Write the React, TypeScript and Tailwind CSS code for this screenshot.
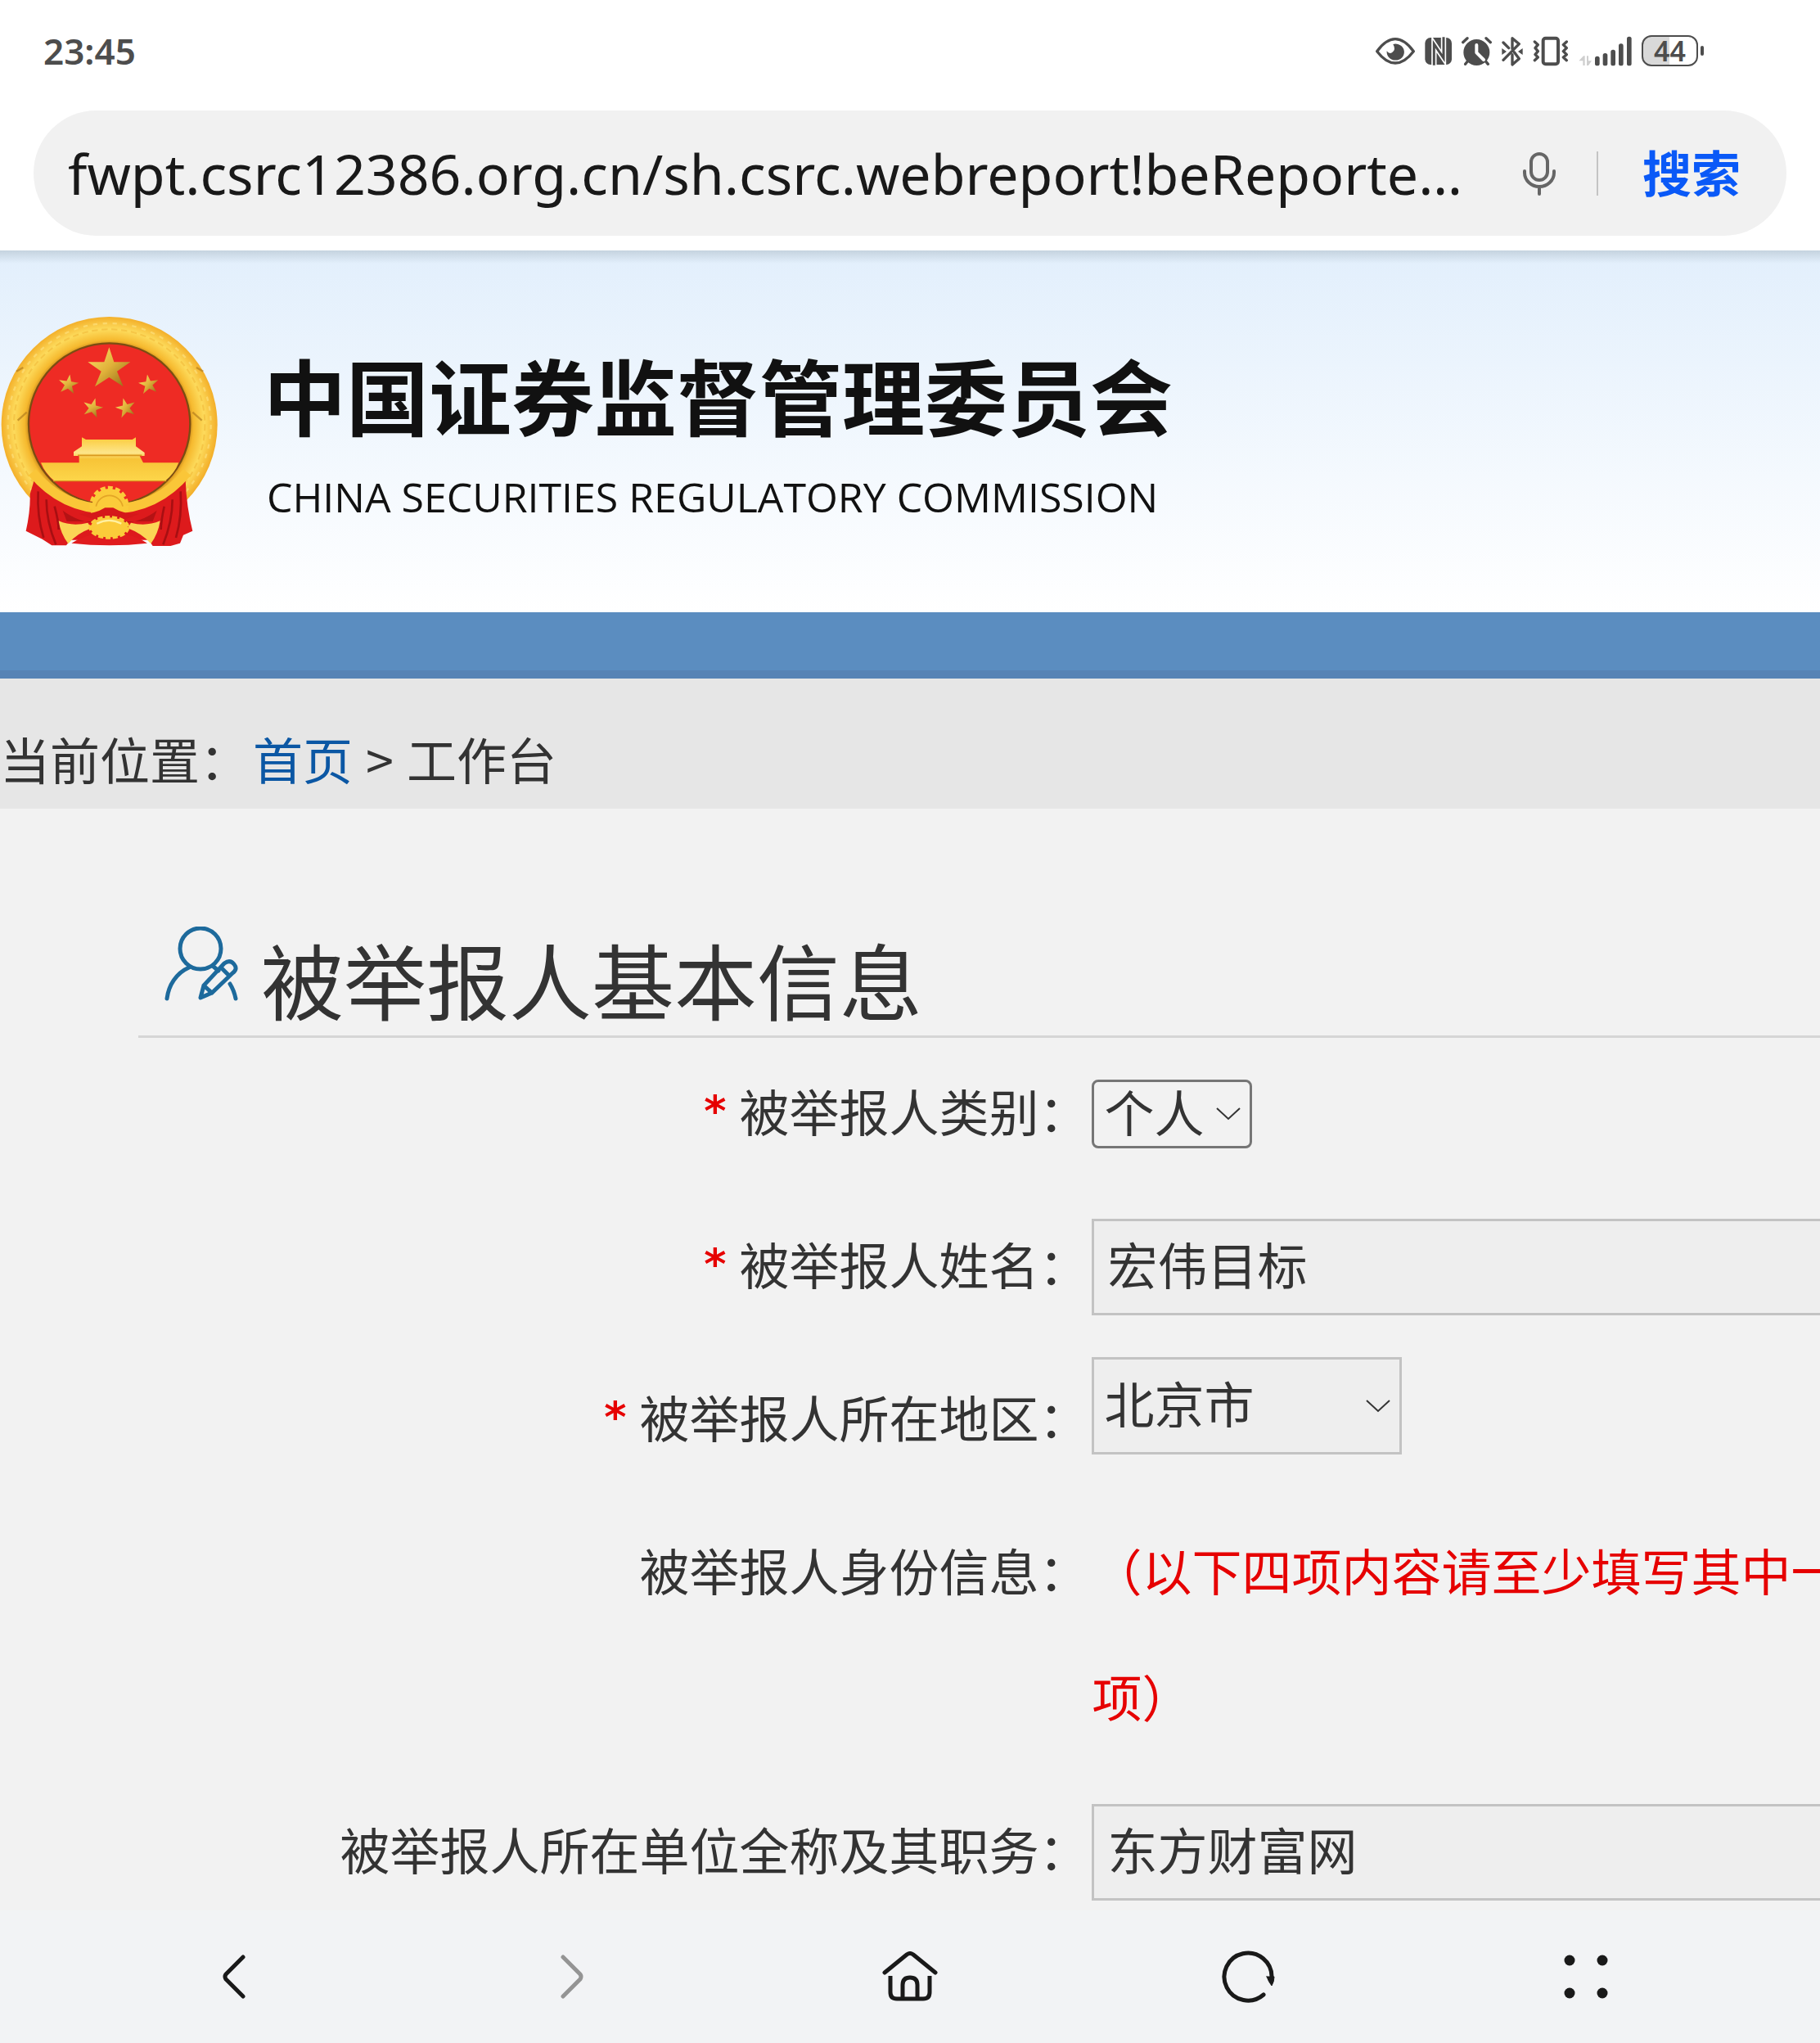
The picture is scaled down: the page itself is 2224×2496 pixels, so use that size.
import type { ReactNode } from 'react';

// phone status icons, all share the same height so they line up in one row
function StatusIcons() {
  return (
    <div className="flex items-center gap-3 text-[#4d4d4d]">
      {/* eye comfort */}
      <svg width="48" height="40" viewBox="66 63 144 120" fill="none" aria-hidden="true">
        <path d="M71 125Q104 80 138 80T205 125Q172 168 138 168T71 125Z" stroke="currentColor" strokeWidth="10" strokeLinejoin="round" />
        <path d="M130 99A32 30 0 1 1 107 124Q114 136 126 130Q142 120 130 99Z" fill="currentColor" />
      </svg>
      {/* nfc */}
      <svg width="33" height="40" viewBox="246 63 99 120" fill="none" aria-hidden="true">
        <rect x="247" y="75" width="98" height="99" rx="20" fill="currentColor" />
        <path d="M280 176V98L315 150V73" stroke="#fff" strokeWidth="19" />
        <path d="M280 176V98L315 150V73" stroke="currentColor" strokeWidth="9" />
      </svg>
      {/* alarm */}
      <svg width="37" height="40" viewBox="383 63 111 120" fill="none" aria-hidden="true">
        <circle cx="438" cy="129" r="48" fill="currentColor" />
        <path d="M388 92L404 77M473 77L489 92M410 155L397 172M466 155L480 172" stroke="currentColor" strokeWidth="10" strokeLinecap="round" />
        <path d="M438 102V130L464 156" stroke="#fff" strokeWidth="12" strokeLinecap="round" strokeLinejoin="round" />
      </svg>
      {/* bluetooth */}
      <svg width="26" height="40" viewBox="530 63 78 120" fill="none" aria-hidden="true">
        <path d="M569 116V77L594 98L536 157M536 93L556 113M576 128L594 152L569 174V137" stroke="currentColor" strokeWidth="10" strokeLinecap="round" strokeLinejoin="round" />
        <path d="M531 114L548 126L531 138ZM607 114L590 126L607 138Z" fill="currentColor" />
      </svg>
      {/* vibrate */}
      <svg width="44" height="40" viewBox="636 63 132 120" fill="none" stroke="currentColor" aria-hidden="true">
        <rect x="674" y="77" width="55" height="95" rx="9" strokeWidth="12" />
        <path d="M643 90L655 101L645 113L655 125L645 137L655 147L643 158M760 90L748 101L760 113L748 125L760 137L748 147L760 158" strokeWidth="10" strokeLinecap="round" strokeLinejoin="round" />
      </svg>
      {/* data + signal */}
      <svg width="65" height="40" viewBox="804 63 195 120" fill="currentColor" aria-hidden="true">
        <path d="M805 160L822 142H827V177H820V160ZM834 142H840V160H852L840 177H834Z" fill="#cfcfcf" />
        <rect x="864" y="143" width="17" height="35" rx="8" />
        <rect x="893" y="132" width="17" height="46" rx="8" />
        <rect x="922" y="119" width="17" height="59" rx="8" />
        <rect x="951" y="97" width="17" height="81" rx="8" />
        <rect x="981" y="71" width="17" height="107" rx="8" />
      </svg>
      <div className="flex items-center gap-[3px]">
        <div className="flex h-[38px] w-[69px] items-center justify-center rounded-xl border-2 border-[#4d4d4d] bg-linear-to-r from-[#d9d9d9] from-50% to-white to-50% text-[34px] leading-none font-semibold">
          44
        </div>
        <div className="h-3 w-1 rounded-sm bg-[#4d4d4d]" />
      </div>
    </div>
  );
}

const STAR = 'M0 -78L18 -24L78 -24L29 10L52 66L0 32L-52 66L-29 10L-78 -24L-18 -24Z';

function Emblem() {
  return (
    <svg width="267" height="280" viewBox="0 50 801 840" role="img" aria-label="国徽" className="shrink-0">
      <defs>
        <radialGradient id="gold" cx="400" cy="445" r="397" gradientUnits="userSpaceOnUse">
          <stop offset="0.74" stopColor="#c98a1c" />
          <stop offset="0.78" stopColor="#f6b92e" />
          <stop offset="0.88" stopColor="#fddb5c" />
          <stop offset="1" stopColor="#f3ae28" />
        </radialGradient>
        <linearGradient id="gate" x1="0" y1="0" x2="0" y2="1">
          <stop offset="0" stopColor="#fbcb3a" />
          <stop offset="0.35" stopColor="#fde58a" />
          <stop offset="0.5" stopColor="#f7c437" />
          <stop offset="1" stopColor="#fdd64a" />
        </linearGradient>
        <linearGradient id="star" x1="0" y1="0" x2="1" y2="1">
          <stop offset="0" stopColor="#ffe36b" />
          <stop offset="0.5" stopColor="#e0b23a" />
          <stop offset="1" stopColor="#8c6414" />
        </linearGradient>
      </defs>
      <circle cx="401" cy="446" r="396" fill="url(#gold)" />
      <circle cx="401" cy="446" r="350" fill="none" stroke="#e9a01f" strokeWidth="6" strokeDasharray="22 14" opacity="0.35" />
      <circle cx="401" cy="446" r="372" fill="none" stroke="#ffe98f" strokeWidth="7" strokeDasharray="16 20" opacity="0.5" />
      <path d="M60 250L85 236M745 250L720 236M65 430L98 400M740 430L706 400" stroke="#a9741b" strokeWidth="7" opacity="0.6" />
      {/* drapes */}
      <path d="M125 650L402 800L680 650Q684 750 706 835L672 850L660 880L625 890H560L545 868H258L243 888H190L155 865L95 835Q112 760 110 700Z" fill="#dd1a1c" />
      <path d="M140 690Q135 780 160 860M170 720Q170 800 205 885M200 745Q215 800 215 830M662 690Q668 780 645 860M632 720Q632 800 598 885M602 745Q590 800 590 830" stroke="#a80f12" strokeWidth="8" fill="none" />
      <path d="M230 760Q310 820 402 800Q495 820 575 760L560 800H245Z" fill="#b51214" />
      <path d="M262 880Q330 835 402 850Q475 835 540 880Q402 895 262 880Z" fill="#e01c1e" />
      <circle cx="401" cy="443" r="296" fill="#ee2b24" stroke="#7b4d12" strokeWidth="7" />
      <path d="M118 620Q230 755 402 755T686 620" stroke="#fac638" strokeWidth="36" fill="none" />
      <path d="M150 585H290V560H270V545L300 525V492L315 500H485L498 492V525L530 548V560H512L525 585H655Q640 625 605 652H200Q165 625 150 585Z" fill="url(#gate)" />
      <path d="M285 558H520" stroke="#d9991f" strokeWidth="5" />
      <path d="M195 652H610" stroke="#d9991f" strokeWidth="4" />
      {/* stars */}
      <path d={STAR} transform="translate(400 240)" fill="url(#star)" />
      <path d={STAR} transform="translate(251 298) rotate(8) scale(.47)" fill="url(#star)" />
      <path d={STAR} transform="translate(545 298) rotate(-8) scale(.47)" fill="url(#star)" />
      <path d={STAR} transform="translate(340 384) rotate(15) scale(.47)" fill="url(#star)" />
      <path d={STAR} transform="translate(461 384) rotate(-15) scale(.47)" fill="url(#star)" />
      {/* gear and knot */}
      <circle cx="400" cy="742" r="62" fill="#fbcb3a" stroke="#fbcb3a" strokeWidth="20" strokeDasharray="17 9" />
      <path d="M352 745A50 50 0 0 1 450 745" stroke="#e3a526" strokeWidth="5" fill="none" />
      <path d="M290 772Q345 775 385 750H415Q455 775 510 772Q450 800 402 800T290 772Z" fill="#d5181a" />
      <path d="M215 798Q265 820 322 805L335 825Q280 845 250 882Q222 845 215 798ZM587 798Q535 820 480 805L468 825Q522 845 553 882Q580 845 587 798Z" fill="#fbd555" />
      <ellipse cx="400" cy="822" rx="68" ry="36" fill="#fbcb3a" stroke="#fbcb3a" strokeWidth="14" strokeDasharray="18 8" />
      <path d="M355 808Q400 785 445 808" stroke="#fff0a0" strokeWidth="7" fill="none" />
    </svg>
  );
}

function UserEditIcon() {
  return (
    <svg width="90" height="92" viewBox="0 0 90 92" fill="none" stroke="#1d6a9c" strokeWidth="5" strokeLinecap="round" strokeLinejoin="round" className="mt-1" aria-hidden="true">
      <ellipse cx="44" cy="27" rx="25" ry="25" />
      <path d="M30 50C14 57 5 72 3 88M60 49L66 54M80 70Q85 78 87 88" />
      <path d="M44 87L48 72L73 45Q80 40 85 46T83 57L58 81ZM48 72L58 81M69 50L79 60" />
    </svg>
  );
}

function SelectBox({ id, value, className }: { id: string; value: string; className: string }) {
  return (
    <div className="relative">
      <select id={id} defaultValue={value} className={`block appearance-none border-[3px] pb-2 pl-3 text-[61px] leading-none outline-none ${className}`}>
        <option>{value}</option>
      </select>
      <svg width="30" height="16" viewBox="0 0 30 16" fill="none" stroke="#333" strokeWidth="2" className="pointer-events-none absolute top-1/2 right-[14px] -translate-y-1/2" aria-hidden="true">
        <path d="M1 1L15 14L29 1" />
      </svg>
    </div>
  );
}

function TextBox({ id, value }: { id: string; value: string }) {
  return <input id={id} defaultValue={value} className="block h-[118px] w-full border-[3px] border-[#c3c3c3] bg-[#eeeeee] pb-2 pl-4 text-[61px] outline-none" />;
}

// label column takes the left 3/5, the field column runs past the right edge
function Row({ label, htmlFor, required, children }: { label: string; htmlFor?: string; required?: boolean; children: ReactNode }) {
  return (
    <div className="flex items-start">
      <label htmlFor={htmlFor} className="flex w-3/5 shrink-0 justify-end gap-4 pr-1">
        {required && <span className="font-['DejaVu_Sans',sans-serif] text-[52px] font-bold text-[#e60000]">*</span>}
        <span>{label}</span>
      </label>
      <div className="w-[1000px] shrink-0">{children}</div>
    </div>
  );
}

function NavButton({ label, children }: { label: string; children: ReactNode }) {
  return (
    <button aria-label={label} className="flex h-full flex-1 items-center justify-center text-[#191919]">
      {children}
    </button>
  );
}

export default function App() {
  return (
    <div className="flex h-screen flex-col overflow-hidden bg-[#f2f2f2] font-['Noto_Sans_CJK_SC',sans-serif] text-[#333]">
      <div className="shrink-0 bg-white pb-[18px] font-['Noto_Sans','Noto_Sans_CJK_SC',sans-serif]">
        <div className="flex h-[123px] items-center justify-between pr-[142px] pl-[53px]">
          <span className="text-[44px] font-semibold text-[#4d4d4d]">23:45</span>
          <StatusIcons />
        </div>
        <div className="mx-[41px] mt-3 flex h-[153px] items-center rounded-full bg-[#f1f1f1] pr-14 pl-[42px]">
          <input
            aria-label="网址"
            defaultValue="fwpt.csrc12386.org.cn/sh.csrc.webreport!beReporte…"
            className="min-w-0 flex-1 text-[68px] text-[#191919] outline-none"
          />
          <button aria-label="语音" className="mx-[50px] shrink-0">
            <svg width="40" height="54" viewBox="0 0 40 54" fill="none" stroke="#666" strokeWidth="4" strokeLinecap="round" aria-hidden="true">
              <rect x="10" y="3" width="20" height="32" rx="10" />
              <path d="M2 24V26A18 17 0 0 0 38 26V24M20 43V52" />
            </svg>
          </button>
          <div className="h-[54px] w-[2px] shrink-0 bg-[#c4c4c4]" />
          <button className="ml-[54px] shrink-0 text-[60px] font-bold text-[#0a59f7]">搜索</button>
        </div>
      </div>

      <main className="min-h-0 flex-1 overflow-hidden">
        <header className="h-[442px] bg-linear-to-b from-[#e2effc] to-white">
          <div className="h-4 bg-linear-to-b from-[#c5d3df] to-transparent" />
          <div className="flex items-start gap-[55px] pt-[65px]">
            <Emblem />
            <div className="pt-[34px] text-[#111]">
              <h1 className="text-[101px] leading-[120px] font-bold">中国证券监督管理委员会</h1>
              <p className="mt-9 pl-1 font-['Open_Sans',sans-serif] text-[50px] leading-[60px]">CHINA SECURITIES REGULATORY COMMISSION</p>
            </div>
          </div>
        </header>
        <div className="h-[81px] border-b-[10px] border-[#5783b5] bg-[#5b8dc0]" />

        <nav className="flex h-[159px] items-center bg-[#e6e6e6] pt-9 text-[61px]">
          <span>当前位置：</span>
          <a href="#" className="ml-1 text-[#0b57a4]">首页</a>
          <span className="px-4">&gt;</span>
          <span>工作台</span>
        </nav>

        <section className="pt-[140px]">
          <div className="ml-[169px] flex h-[140px] items-start gap-7 border-b-[3px] border-[#d6d6d6] pl-8">
            <UserEditIcon />
            <h2 className="pt-[7px] text-[101px] leading-[120px]">被举报人基本信息</h2>
          </div>

          <form className="mt-3 flex flex-col gap-[33px] text-[61px] leading-[154px]">
            <Row label="被举报人类别：" htmlFor="type" required>
              <div className="flex h-[154px] items-center pt-2">
                <SelectBox id="type" value="个人" className="h-[84px] w-[196px] rounded-lg border-[#767676] bg-transparent" />
              </div>
            </Row>
            <Row label="被举报人姓名：" htmlFor="name" required>
              <div className="flex h-[154px] items-center pt-2">
                <TextBox id="name" value="宏伟目标" />
              </div>
            </Row>
            <Row label="被举报人所在地区：" htmlFor="area" required>
              <div className="flex h-[154px] items-start pt-1">
                <SelectBox id="area" value="北京市" className="h-[119px] w-[379px] border-[#c3c3c3] bg-[#eeeeee]" />
              </div>
            </Row>
            <Row label="被举报人身份信息：">
              <p className="text-[#e60000]">（以下四项内容请至少填写其中一项）</p>
            </Row>
            <Row label="被举报人所在单位全称及其职务：" htmlFor="company">
              <div className="flex h-[154px] items-center pt-2">
                <TextBox id="company" value="东方财富网" />
              </div>
            </Row>
          </form>
        </section>
      </main>

      <footer className="flex h-[162px] shrink-0 items-center bg-[#f2f3f5] px-20">
        <NavButton label="后退">
          <svg width="28" height="54" viewBox="0 0 28 54" fill="none" stroke="currentColor" strokeWidth="5" strokeLinecap="round" strokeLinejoin="round">
            <path d="M25 3L4 24Q2 27 4 30L25 51" />
          </svg>
        </NavButton>
        <NavButton label="前进">
          <svg width="28" height="54" viewBox="0 0 28 54" fill="none" stroke="#949494" strokeWidth="5" strokeLinecap="round" strokeLinejoin="round">
            <path d="M3 3L24 24Q26 27 24 30L3 51" />
          </svg>
        </NavButton>
        <NavButton label="主页">
          <svg width="68" height="62" viewBox="0 0 68 62" fill="none" stroke="currentColor" strokeWidth="5" strokeLinecap="round" strokeLinejoin="round">
            <path d="M3 26L30 4Q34 1 38 4L65 26" />
            <path d="M10 30V50Q10 58 18 58H50Q58 58 58 50V30" strokeLinecap="butt" />
            <path d="M25 57V41Q25 32 34 32T43 41V57" />
          </svg>
        </NavButton>
        <NavButton label="刷新">
          <svg width="66" height="66" viewBox="-1 -1 66 66" fill="none" stroke="currentColor" strokeWidth="5" strokeLinecap="round">
            <path d="M51 54A29 29 0 1 1 61 33" />
            <path d="M55 32H64Q64 38 61 43Q57 38 55 32Z" fill="currentColor" strokeWidth="1" />
          </svg>
        </NavButton>
        <NavButton label="菜单">
          <svg width="54" height="54" viewBox="0 0 54 54" fill="currentColor">
            <circle cx="7" cy="7" r="6.5" />
            <circle cx="47" cy="7" r="6.5" />
            <circle cx="7" cy="47" r="6.5" />
            <circle cx="47" cy="47" r="6.5" />
          </svg>
        </NavButton>
      </footer>
    </div>
  );
}
